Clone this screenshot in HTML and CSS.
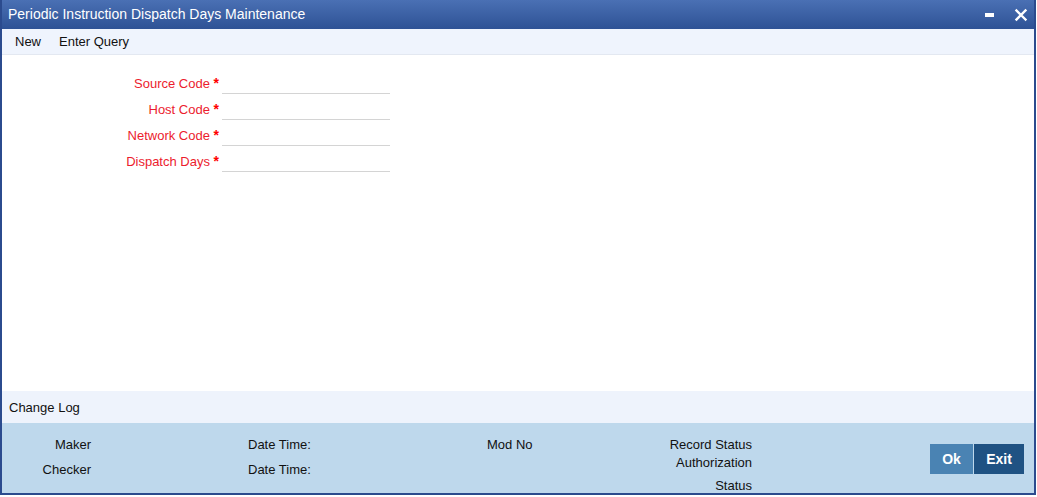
FILE: index.html
```html
<!DOCTYPE html>
<html lang="en">
<head>
<meta charset="UTF-8">
<title>Periodic Instruction Dispatch Days Maintenance</title>
<link rel="stylesheet" href="styles.css">
</head>
<body>
<div class="win">
  <div class="titlebar">
    <span class="title">Periodic Instruction Dispatch Days Maintenance</span>
    <div class="winbtns">
      <svg class="ico" width="12" height="12" viewBox="0 0 12 12"><rect x="1" y="4" width="9" height="4" fill="#fff"/></svg>
      <svg class="ico" width="14" height="14" viewBox="0 0 14 14"><path d="M2.5 2.5L11.5 11.5M11.5 2.5L2.5 11.5" stroke="#fff" stroke-width="2.4" stroke-linecap="square"/></svg>
    </div>
  </div>

  <div class="menubar">
    <span class="mi">New</span>
    <span class="mi">Enter Query</span>
  </div>

  <div class="content">
    <div class="frow"><label class="flbl">Source Code <span class="req">*</span></label><input class="fin" type="text"></div>
    <div class="frow"><label class="flbl">Host Code <span class="req">*</span></label><input class="fin" type="text"></div>
    <div class="frow"><label class="flbl">Network Code <span class="req">*</span></label><input class="fin" type="text"></div>
    <div class="frow"><label class="flbl">Dispatch Days <span class="req">*</span></label><input class="fin" type="text"></div>
  </div>

  <div class="logbar">Change Log</div>

  <div class="footer">
    <div class="log">
      <span class="r">Maker</span><span></span><span>Date Time:</span><span>Mod No</span><span class="r">Record Status</span>
      <span class="r">Checker</span><span></span><span>Date Time:</span><span></span><span class="r auth">Authorization<br>Status</span>
    </div>
    <div class="actions">
      <button class="btn ok">Ok</button>
      <button class="btn exit">Exit</button>
    </div>
  </div>
</div>
</body>
</html>
```

FILE: styles.css
```css
*{box-sizing:border-box;margin:0;padding:0}
body{background:#fff;font-family:"Liberation Sans",Arial,sans-serif;font-size:13px;color:#111}
.win{width:1036px;height:495px;display:flex;flex-direction:column;border:2px solid #2b4b8e;border-top:none;background:#fff}

/* title */
.titlebar{height:29px;flex:none;display:flex;align-items:center;padding-left:6px;
  background:linear-gradient(#4a70b4,#2e5295);color:#fff}
.title{font-size:14px;line-height:29px}
.winbtns{margin-left:auto;display:flex;align-items:center;gap:18px;padding-right:6px}
.ico{display:block}

/* menu */
.menubar{height:26px;flex:none;display:flex;background:#eff4fd;border-bottom:1px solid #e3e8f1;padding-left:4px}
.mi{line-height:26px;padding:0 9px}

/* form */
.content{flex:1;padding-top:13px}
.frow{display:flex;height:26px}
.flbl{width:217px;text-align:right;color:#ec1c2e;padding-top:5px;line-height:20px}
.req{color:#f00;font-weight:bold;font-size:14px}
.fin{width:168px;height:26px;margin-left:3px;border:none;border-bottom:1px solid #d4d4d4;outline:none;background:transparent;font:inherit}

/* change log */
.logbar{height:32px;flex:none;line-height:33px;padding-left:7px;background:#eef3fc}
.footer{height:70px;flex:none;display:flex;background:#bed8ec;padding-right:10px}
.log{display:grid;grid-template-columns:89px 157px 239px 113px 152px;grid-auto-rows:25px;margin-top:9px;line-height:25px}
.log .r{text-align:right}
.log .auth{line-height:23px;margin-top:-6px}
.actions{margin-left:auto;margin-top:21px;display:flex;gap:1px;align-self:flex-start}
.btn{height:30px;border:none;color:#fff;font-family:"Liberation Sans",Arial,sans-serif;font-size:14px;font-weight:bold;cursor:pointer}
.ok{width:43px;background:#4a83b3}
.exit{width:50px;background:#1f5283}
```
